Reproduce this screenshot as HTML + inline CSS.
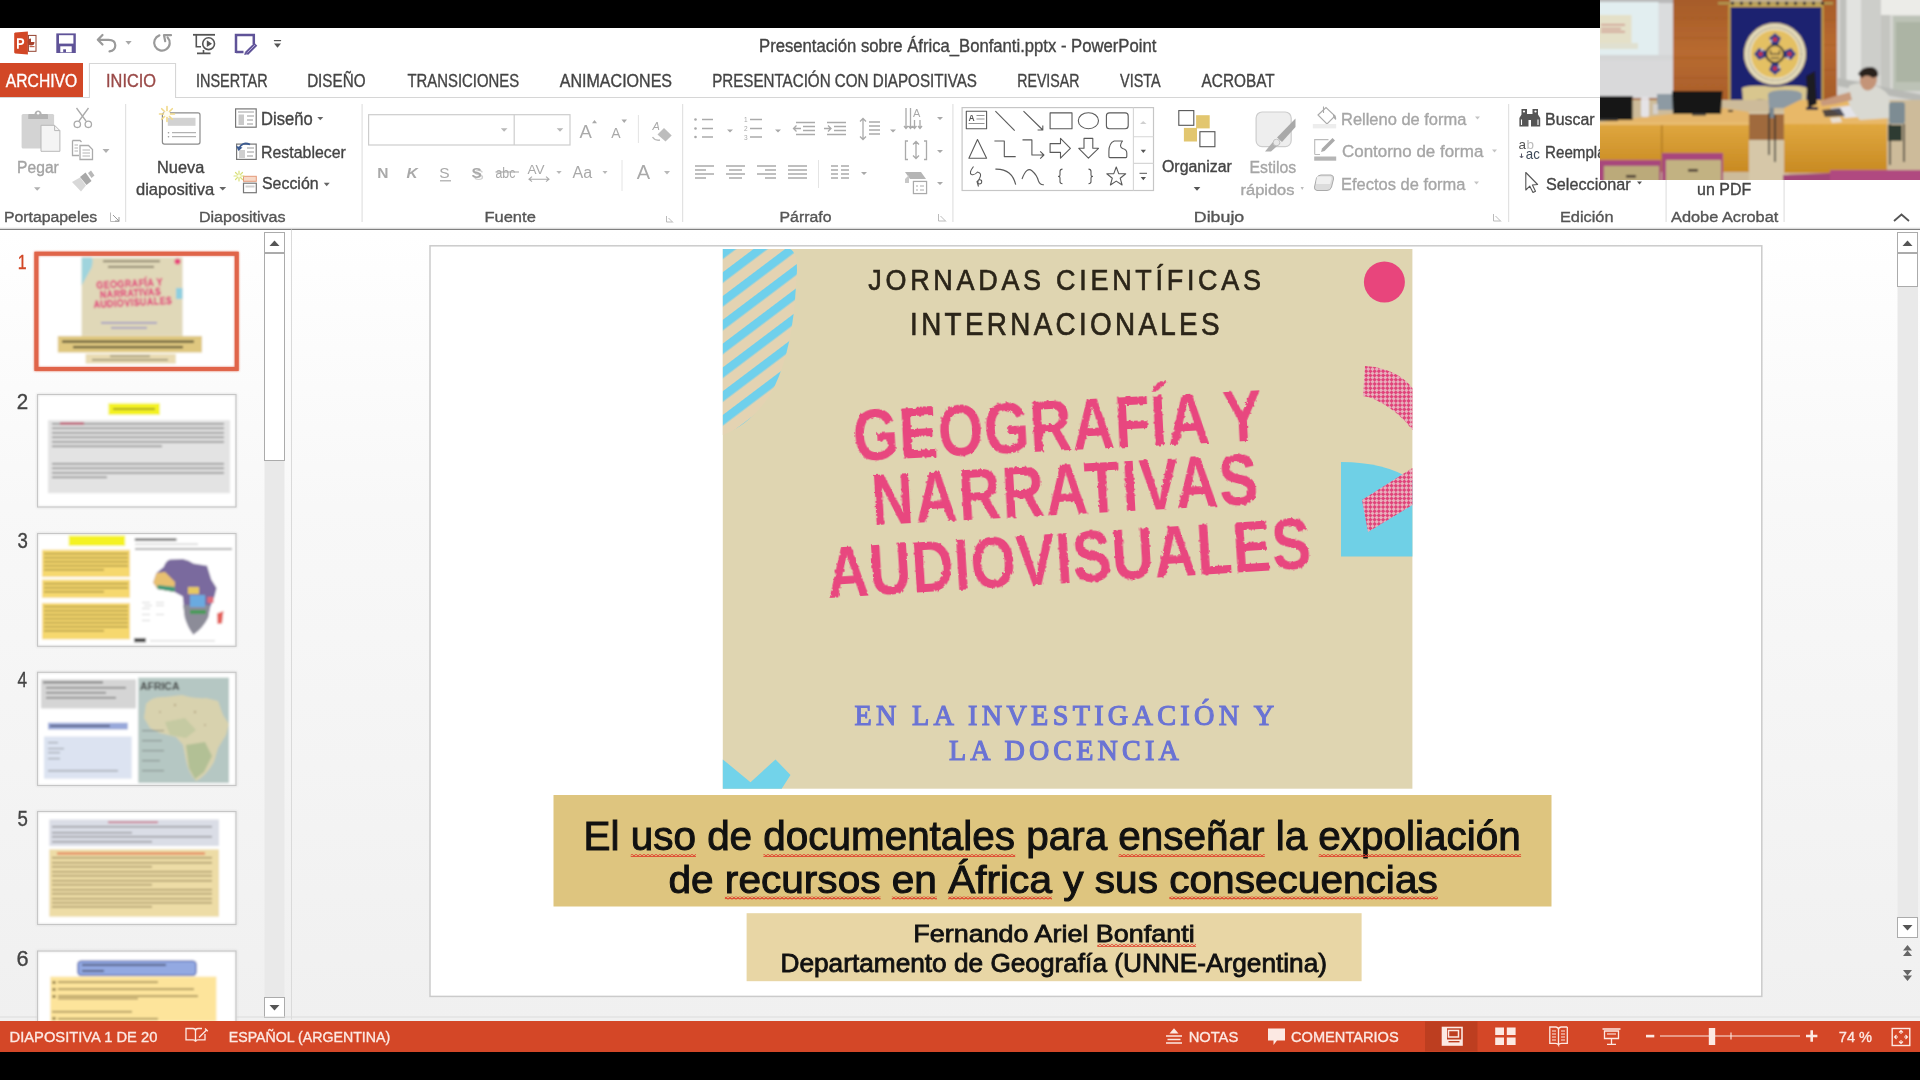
<!DOCTYPE html>
<html><head><meta charset="utf-8"><style>
html,body{margin:0;padding:0;width:1920px;height:1080px;overflow:hidden;background:#000}
svg{display:block;will-change:transform}
text{white-space:pre}
</style></head><body>
<svg width="1920" height="1080" viewBox="0 0 1920 1080">
<defs>
<linearGradient id="mainbg" x1="0" y1="0" x2="0" y2="1">
<stop offset="0" stop-color="#FFFFFF"/><stop offset="0.35" stop-color="#F8F8F8"/><stop offset="1" stop-color="#F0F0F0"/>
</linearGradient>
<pattern id="stripes" patternUnits="userSpaceOnUse" width="19" height="19" patternTransform="translate(722,249) rotate(-37)">
<rect width="19" height="19" fill="#E4D3B2"/><rect width="19" height="8.5" fill="#6FD0EC"/>
</pattern>
<pattern id="checker" patternUnits="userSpaceOnUse" width="6" height="6" patternTransform="rotate(45)">
<rect width="6" height="6" fill="#E8B0BC"/><rect width="3" height="3" fill="#E0437A"/><rect x="3" y="3" width="3" height="3" fill="#E0437A"/>
</pattern>
</defs>
<rect x="0" y="0" width="1920" height="1080" fill="#000"/>
<rect x="0" y="28" width="1920" height="200" fill="#FFFFFF"/>
<!-- tabs -->
<rect x="0" y="63" width="83" height="35" fill="#D24726"/>
<path d="M0 97.5 H89.5 V63.5 H175.5 V97.5 H1920" fill="none" stroke="#D6D6D6" stroke-width="1.2"/>
<rect x="90" y="64" width="85" height="34" fill="#FFFFFF"/>
<!-- ribbon bottom border -->
<rect x="0" y="227.7" width="1920" height="1.3" fill="#DCDCDC"/>
<!-- group separators -->
<g fill="#E2E2E2">
<rect x="125" y="104" width="1.2" height="118"/>
<rect x="361.5" y="104" width="1.2" height="118"/>
<rect x="682" y="104" width="1.2" height="118"/>
<rect x="952.3" y="104" width="1.2" height="118"/>
<rect x="1508" y="104" width="1.2" height="118"/>
<rect x="1665.5" y="104" width="1.2" height="118"/>
<rect x="1783.5" y="104" width="1.2" height="118"/>
</g>
<!-- main area -->
<rect x="0" y="229.5" width="1920" height="792" fill="url(#mainbg)"/>
<rect x="291" y="229.5" width="1" height="790" fill="#DADADA"/>
<!-- left scrollbar -->
<rect x="264.5" y="232.5" width="20" height="785" fill="#E9E9E9"/>
<rect x="264.5" y="232.5" width="20" height="20" fill="#FFF" stroke="#ABABAB" stroke-width="1"/>
<path d="M269.5 246 L274.5 240.5 L279.5 246 Z" fill="#555"/>
<rect x="264.5" y="253.5" width="20" height="207" fill="#FFF" stroke="#ABABAB" stroke-width="1"/>
<rect x="264.5" y="997.5" width="20" height="20" fill="#FFF" stroke="#ABABAB" stroke-width="1"/>
<path d="M269.5 1005 L274.5 1010.5 L279.5 1005 Z" fill="#555"/>
<!-- right scrollbar -->
<rect x="1897.5" y="232.5" width="20.5" height="705" fill="#E9E9E9"/>
<rect x="1897.5" y="232.5" width="20" height="20" fill="#FFF" stroke="#ABABAB" stroke-width="1"/>
<path d="M1902.5 246 L1907.5 240.5 L1912.5 246 Z" fill="#555"/>
<rect x="1897.5" y="253.5" width="20" height="33" fill="#FFF" stroke="#ABABAB" stroke-width="1"/>
<rect x="1897.5" y="917.5" width="20" height="20" fill="#FFF" stroke="#ABABAB" stroke-width="1"/>
<path d="M1902.5 925 L1907.5 930.5 L1912.5 925 Z" fill="#555"/>
<path d="M1903 950.5 L1907.5 945 L1912 950.5 Z M1903 956 L1907.5 950.5 L1912 956 Z" fill="#666"/>
<path d="M1903 970 L1907.5 975.5 L1912 970 Z M1903 975.5 L1907.5 981 L1912 975.5 Z" fill="#666"/>
<!-- status bar -->
<rect x="0" y="1021" width="1920" height="31" fill="#D44727"/>
<rect x="1425" y="1021.5" width="52.5" height="30" fill="#BD3E20"/>
<rect x="0" y="1016.5" width="1920" height="1" fill="#DCDCDC"/>
<!-- slide -->
<rect x="430" y="245.8" width="1331.8" height="750.6" fill="#FFFFFF" stroke="#CBCBCB" stroke-width="1.5"/>
<rect x="722.8" y="249" width="689.6" height="539.7" fill="#DFD5B1"/>
<g clip-path="none">
<path d="M722.8 249 H790 Q797 252 797 270 L795 300 Q790 360 770 395 Q750 425 722.8 435 Z" fill="url(#stripes)"/>
<circle cx="1384.4" cy="282" r="20.5" fill="#E8457C"/>
<path d="M1341 556.5 V462 Q1385 462 1412.4 480 V556.5 Z" fill="#6FD0E6"/>
<path d="M1365 366 L1375 367 Q1400 372 1412.4 388 V430 Q1398 410 1372 398 L1363 396 Z" fill="url(#checker)"/>
<path d="M1362 500 L1412.4 468 V505 L1368 532 Z" fill="url(#checker)"/>
<path d="M722.8 759.4 L750.5 782.2 L775.5 759.4 L790.5 775 L781.7 788.7 H722.8 Z" fill="#72D3EA"/>
</g>
<rect x="553.5" y="795" width="998" height="111.5" fill="#DEC57F"/>
<rect x="746.6" y="913.2" width="615" height="68" fill="#E8D6A5"/>
<!-- thumbnails -->
<clipPath id="thclip"><rect x="0" y="229" width="262" height="792"/></clipPath>
<filter id="thblur"><feGaussianBlur stdDeviation="0.8"/></filter>
<g clip-path="url(#thclip)"><g id="thumbs" filter="url(#thblur)">
<!-- 1 -->
<rect x="36.4" y="253.75" width="200.3" height="115.2" fill="#FFF" stroke="#E2664B" stroke-width="4"/>
<rect x="81.6" y="257.4" width="101" height="78.4" fill="#E0D8B8"/>
<path d="M81.6 257.4 h10 q2 2 0 10 l-10 18 z" fill="#8FD3E6" opacity="0.8"/>
<circle cx="177.5" cy="261.5" r="3" fill="#E8457C"/>
<rect x="176" y="288" width="6.5" height="11" fill="#8ECFE0"/>
<g fill="#4A4030" opacity="0.7"><rect x="103" y="260.5" width="57" height="1.6"/><rect x="108" y="266" width="46" height="1.6"/></g>
<g fill="#E24A7E" stroke="#E24A7E" stroke-width="0.4" font-family="Liberation Sans" font-weight="bold" transform="rotate(-3 132 300)">
<text x="97" y="287" font-size="10.5" letter-spacing="0.5" transform="translate(98,0) scale(0.85,1) translate(-98,0)">GEOGRAFÍA Y</text>
<text x="100" y="296.5" font-size="10.5" letter-spacing="0.5" transform="translate(101,0) scale(0.85,1) translate(-101,0)">NARRATIVAS</text>
<text x="93" y="306" font-size="10.5" letter-spacing="0.5" transform="translate(95,0) scale(0.85,1) translate(-95,0)">AUDIOVISUALES</text>
</g>
<g fill="#8A86C8" opacity="0.8"><rect x="101" y="322" width="56" height="1.6"/><rect x="111" y="327" width="36" height="1.6"/></g>
<rect x="57.8" y="336" width="144.2" height="16.5" fill="#DFC77F"/>
<g fill="#2A2A1A" opacity="0.75"><rect x="62" y="340.5" width="132" height="2.2"/><rect x="73" y="346" width="110" height="2.2"/></g>
<rect x="85.6" y="354" width="90.2" height="9.6" fill="#E9DBB2"/>
<g fill="#3A3A2A" opacity="0.5"><rect x="110" y="355.5" width="40" height="1.5"/><rect x="92" y="359" width="76" height="1.5"/></g>
<!-- 2 -->
<rect x="37.5" y="394.5" width="198.5" height="112.5" fill="#FFF" stroke="#C9C9C9" stroke-width="1"/>
<rect x="108.4" y="403.3" width="51.6" height="11.7" fill="#F4F222"/>
<rect x="113" y="408" width="42" height="2" fill="#5A5A20" opacity="0.5"/>
<rect x="48" y="420.2" width="182" height="73" fill="#E3E3E3"/>
<g fill="#6E6E6E" opacity="0.75">
<rect x="52" y="423" width="172" height="1.6"/><rect x="52" y="427.5" width="172" height="1.6"/><rect x="52" y="432" width="172" height="1.6"/><rect x="52" y="436.5" width="172" height="1.6"/><rect x="52" y="441" width="172" height="1.6"/><rect x="52" y="445.5" width="110" height="1.6"/>
<rect x="52" y="463" width="172" height="1.6"/><rect x="52" y="467.5" width="172" height="1.6"/><rect x="52" y="472" width="172" height="1.6"/><rect x="52" y="476.5" width="55" height="1.6"/>
</g>
<rect x="60" y="422.5" width="24" height="2" fill="#C0103C" opacity="0.8"/>
<!-- 3 -->
<rect x="37.5" y="533.5" width="198.5" height="112.8" fill="#FFF" stroke="#C9C9C9" stroke-width="1"/>
<rect x="68.7" y="535.6" width="56.5" height="10.4" fill="#F4F222"/>
<rect x="42" y="549.8" width="88" height="27.2" fill="#F6D86E"/>
<rect x="42" y="579.6" width="88" height="18.2" fill="#F6D86E"/>
<rect x="42" y="603" width="88" height="36.3" fill="#F6D86E"/>
<g fill="#6B5A20" opacity="0.55">
<rect x="44" y="553" width="84" height="1.4"/><rect x="44" y="557" width="84" height="1.4"/><rect x="44" y="561" width="84" height="1.4"/><rect x="44" y="565" width="84" height="1.4"/><rect x="44" y="569" width="60" height="1.4"/>
<rect x="44" y="583" width="84" height="1.4"/><rect x="44" y="587" width="84" height="1.4"/><rect x="44" y="591" width="60" height="1.4"/>
<rect x="44" y="606" width="84" height="1.4"/><rect x="44" y="610" width="84" height="1.4"/><rect x="44" y="614" width="84" height="1.4"/><rect x="44" y="618" width="84" height="1.4"/><rect x="44" y="622" width="84" height="1.4"/><rect x="44" y="626" width="84" height="1.4"/><rect x="44" y="630" width="60" height="1.4"/>
</g>
<rect x="134.8" y="538.3" width="41.7" height="2.6" fill="#333" opacity="0.7"/>
<rect x="135" y="543.6" width="63" height="1.2" fill="#999" opacity="0.5"/>
<rect x="135" y="548.2" width="97" height="1.6" fill="#555" opacity="0.6"/>
<path d="M163.8 566.8 Q166 560 170.1 559.4 L182.8 558.9 Q189 560 193.4 563.6 L207.1 565.7 L211.3 579.5 L216.6 587.9 L214.5 596.4 L210.3 606.9 L208.1 617.5 Q203 628 193.4 634.4 Q188 628 184.9 617.5 L182.8 596.4 L174.4 592.1 L157.5 589 L153.2 582.6 L156.4 573.1 Z" fill="#7A6A9E"/>
<path d="M156.4 573.1 L165 572 L175 582 L174.4 592.1 L157.5 589 L153.2 582.6 Z" fill="#E8C070"/>
<path d="M157.5 585 L175 587 L174.4 592.1 L157.5 589 Z" fill="#3E9A7A"/>
<path d="M183 605 L210 605 L208.1 617.5 Q203 628 193.4 634.4 Q188 628 184.9 617.5 Z" fill="#8C8C98"/>
<rect x="188" y="587" width="11" height="7" fill="#E6C860"/>
<rect x="190" y="595" width="15" height="12" fill="#6AAAE0"/>
<rect x="207.5" y="597" width="6" height="6" fill="#E06A78"/>
<path d="M190 610 H206 V614 H190 Z" fill="#4A9A5A"/>
<path d="M217 613.5 L223.5 611 L222 623.5 L217.5 624 Z" fill="#E4605A"/>
<g fill="#888" opacity="0.35"><rect x="142" y="602" width="8" height="1"/><rect x="144" y="605" width="8" height="1"/><rect x="142" y="608" width="8" height="1"/><rect x="142" y="614" width="8" height="1"/><rect x="142" y="620" width="8" height="1"/><rect x="156" y="602" width="8" height="1"/><rect x="156" y="605" width="8" height="1"/><rect x="156" y="614" width="8" height="1"/></g>
<rect x="134.2" y="638" width="11.6" height="4.3" fill="#444"/>
<rect x="150" y="640" width="65" height="1.5" fill="#CCC" opacity="0.6"/>
<!-- 4 -->
<rect x="37.5" y="672.3" width="198.5" height="113.2" fill="#FFF" stroke="#C9C9C9" stroke-width="1"/>
<rect x="41" y="679.4" width="95" height="29.1" fill="#D5D5D5"/>
<g fill="#333" opacity="0.6"><rect x="43" y="681.5" width="60" height="1.8"/><rect x="46" y="687" width="80" height="1.4"/><rect x="46" y="692" width="60" height="1.4"/><rect x="46" y="697" width="70" height="1.4"/></g>
<rect x="48" y="722.7" width="79.8" height="6.8" fill="#98A8DA"/>
<rect x="50" y="725" width="60" height="1.8" fill="#223" opacity="0.6"/>
<rect x="44" y="736.5" width="87.7" height="42.2" fill="#DCE3F1"/>
<g fill="#555" opacity="0.45"><rect x="48" y="742" width="10" height="1.2"/><rect x="48" y="748" width="16" height="1.2"/><rect x="48" y="752" width="12" height="1.2"/><rect x="48" y="758" width="12" height="1.2"/><rect x="48" y="770" width="70" height="1.4"/></g>
<rect x="138.2" y="677.6" width="90.8" height="105.4" fill="#B5C7C3"/>
<path d="M146 704 Q152 696 165 697 L182 695 Q196 699 206 698 L218 701 L223 715 L229 724 L226 735 L218 748 L214 762 Q206 776 196 781 Q188 772 186 760 L183 745 L176 737 L160 733 L150 728 L144 718 Z" fill="#D8D2AE"/>
<path d="M186 745 L205 742 L212 756 L204 772 L195 779 L189 768 Z" fill="#A9BC8E" opacity="0.8"/>
<path d="M165 722 L185 718 L196 730 L186 738 L170 735 Z" fill="#B9C49A" opacity="0.6"/>
<g fill="#9A8060" opacity="0.5"><circle cx="175" cy="705" r="1.2"/><circle cx="195" cy="712" r="1.2"/><circle cx="160" cy="712" r="1"/><circle cx="205" cy="725" r="1"/></g>
<text x="140" y="690" font-family="Liberation Sans" font-weight="bold" font-size="11" fill="#333" transform="translate(140,0) scale(0.95,1) translate(-140,0)">AFRICA</text>
<g fill="#555" opacity="0.45"><rect x="142" y="730" width="22" height="1.2"/><rect x="142" y="740" width="20" height="1.2"/><rect x="142" y="750" width="22" height="1.2"/><rect x="142" y="760" width="18" height="1.2"/><rect x="142" y="770" width="22" height="1.2"/></g>
<!-- 5 -->
<rect x="37.5" y="811.5" width="198.5" height="113" fill="#FFF" stroke="#C9C9C9" stroke-width="1"/>
<rect x="49.3" y="819.5" width="169.7" height="26.5" fill="#DADDE6"/>
<g fill="#555" opacity="0.55"><rect x="52" y="826" width="160" height="1.4"/><rect x="52" y="832" width="80" height="1.4"/><rect x="52" y="836" width="160" height="1.4"/><rect x="52" y="841" width="100" height="1.4"/></g>
<rect x="108" y="821.5" width="50" height="1.6" fill="#C03050" opacity="0.7"/>
<rect x="49.3" y="849.3" width="169.7" height="67.4" fill="#EDDCA6"/>
<rect x="57" y="852.5" width="148" height="2" fill="#E05030" opacity="0.7"/>
<g fill="#5A4A20" opacity="0.5">
<rect x="52" y="857" width="160" height="1.4"/><rect x="52" y="862" width="160" height="1.4"/><rect x="52" y="866" width="100" height="1.4"/><rect x="52" y="871" width="160" height="1.4"/><rect x="52" y="875" width="160" height="1.4"/><rect x="52" y="880" width="160" height="1.4"/><rect x="52" y="884" width="100" height="1.4"/><rect x="52" y="889" width="160" height="1.4"/><rect x="52" y="893" width="160" height="1.4"/><rect x="52" y="898" width="160" height="1.4"/><rect x="52" y="902" width="160" height="1.4"/><rect x="52" y="906" width="100" height="1.4"/>
</g>
<!-- 6 -->
<rect x="37.5" y="951" width="198.5" height="75" fill="#FFF" stroke="#C9C9C9" stroke-width="1"/>
<rect x="77.8" y="961" width="118.3" height="14.4" rx="3" fill="#93A9E2" stroke="#3D50A0" stroke-width="1"/>
<g fill="#223" opacity="0.6"><rect x="82" y="964" width="84" height="1.8"/><rect x="82" y="970" width="22" height="1.8"/></g>
<rect x="50.3" y="976.6" width="166.1" height="45" fill="#FDE49B"/>
<g fill="#4A3A10" opacity="0.6"><rect x="52.5" y="981" width="3" height="3"/><rect x="58" y="981.5" width="100" height="1.4"/><rect x="52.5" y="988" width="3" height="3"/><rect x="58" y="988.5" width="136" height="1.4"/><rect x="52.5" y="995" width="3" height="3"/><rect x="58" y="995.5" width="140" height="1.4"/><rect x="58" y="998" width="80" height="1.2"/><rect x="52" y="1011" width="80" height="1.4"/><rect x="52.5" y="1017" width="3" height="3"/><rect x="58" y="1018" width="100" height="1.4"/></g>
</g>
<g fill="none" stroke="#C6C6C6" stroke-width="1">
<rect x="37.5" y="394.5" width="198.5" height="112.5"/>
<rect x="37.5" y="533.5" width="198.5" height="112.8"/>
<rect x="37.5" y="672.3" width="198.5" height="113.2"/>
<rect x="37.5" y="811.5" width="198.5" height="113"/>
<rect x="37.5" y="951" width="198.5" height="75"/>
</g>
<rect x="36.4" y="253.75" width="200.3" height="115.2" fill="none" stroke="#E0654A" stroke-width="4"/>
</g>

<g id="icons">
<!-- QAT -->
<path d="M14.2 33.5 Q14.2 32.6 15.2 32.4 L27.9 31.6 V54.4 L15.2 53.4 Q14.2 53.2 14.2 52.3 Z" fill="#D24726"/>
<path d="M17 48.8 V38.2 H20.6 Q24.2 38.2 24.2 41.6 Q24.2 45 20.6 45 H18.8 V48.8 Z M18.8 39.9 V43.3 H20.4 Q22.3 43.3 22.3 41.6 Q22.3 39.9 20.4 39.9 Z" fill="#FFF"/>
<rect x="28.4" y="35.4" width="7.6" height="15.9" fill="#FFF" stroke="#93402D" stroke-width="1"/>
<path d="M31 38.5 V42 H34.5 A3.5 3.5 0 1 1 31 38.5 Z" fill="#A8402C"/>
<rect x="29.5" y="46" width="5" height="1.2" fill="#C0604A"/>
<rect x="56.3" y="33.4" width="19.5" height="19.6" fill="#5F5398"/>
<rect x="59" y="35.2" width="14.4" height="8.4" fill="#FFF"/>
<rect x="60.3" y="46.3" width="11.4" height="6" fill="#FFF"/>
<rect x="63.2" y="49.3" width="2.8" height="3" fill="#5F5398"/>
<g fill="none" stroke="#9A9A9A" stroke-width="2.2" stroke-linecap="round" stroke-linejoin="round">
<path d="M102.5 35 L97.8 39.8 L102.5 44.5 M98.5 39.8 H108.5 Q115.3 39.8 115.3 45.2 Q115.3 50.5 109.5 51.3"/>
<path d="M159.4 35.4 A7.8 7.8 0 1 0 167.6 37.4"/>
<path d="M171 35.2 H164 L165.2 41.2"/>
</g>
<path d="M125.4 41 H131.7 L128.5 44.7 Z" fill="#A8A8A8"/>

<g fill="none" stroke="#555" stroke-width="1.6">
<path d="M193 34.8 H215" stroke-width="1.8"/>
<path d="M196.3 35 V46.8 H201"/>
<circle cx="208.6" cy="43.7" r="5.9"/>
<path d="M197 53.4 H210.5 M203.5 50 L203.5 53"/>
</g>
<path d="M206.8 40.3 L212 43.7 L206.8 47.1 Z" fill="#555"/>
<path d="M236 53 V35 H253.8 V44 M236 51.9 H243.5" fill="none" stroke="#5F5398" stroke-width="2.5"/>
<path d="M246.5 53.5 L255.8 44.2" stroke="#5F5398" stroke-width="4.2" stroke-linecap="butt"/>
<path d="M244.2 55 L245 51.8 L247.5 54.3 Z" fill="#5F5398"/>
<path d="M247.3 52.6 L255 44.9" stroke="#C9C0E6" stroke-width="0.9"/>
<path d="M273.9 40.6 H281.1" stroke="#555" stroke-width="1.2"/>
<path d="M274 43.5 H281 L277.5 47.8 Z" fill="#555"/>

<!-- Portapapeles -->
<rect x="21.6" y="113.9" width="32.5" height="34.7" rx="1.5" fill="#D3D3D3"/>
<path d="M28.2 119.1 V115 Q28.2 114 29.2 114 H34.5 Q35 110.4 38.1 110.4 Q41.2 110.4 41.7 114 H47 Q48 114 48 115 V119.1 Z" fill="#B3B3B3"/>
<circle cx="38.1" cy="113.2" r="1.3" fill="#FFF"/>
<path d="M41 125.3 H54.6 L59.9 130.6 V151.3 H41 Z" fill="#F4F4F4" stroke="#B8B8B8" stroke-width="1"/>
<path d="M54.6 125.3 V130.6 H59.9" fill="none" stroke="#B8B8B8" stroke-width="1"/>
<g fill="none" stroke="#ABABAB" stroke-width="1.3">
<path d="M76.5 108 L86 121 M88.5 108 L79 121"/>
<circle cx="77.3" cy="124.3" r="3.2"/><circle cx="88.3" cy="124.3" r="3.2"/>
<path d="M72.5 140.5 H80 L81.5 142 M72.5 140.5 V155.5 H79"/>
<path d="M80 145.5 H88.5 L92.5 149.5 V159.5 H80 Z"/>
<path d="M82.5 150 H90 M82.5 153 H90 M82.5 156 H90 M74.5 145 H78 M74.5 148 H78 M74.5 151 H78" stroke-width="0.9"/>
</g>
<path d="M102.5 149 H109.5 L106 153 Z" fill="#B0B0B0"/>
<path d="M34 187.3 H40.5 L37.2 190.8 Z" fill="#B0B0B0"/>
<path d="M72 182 L80 177.5 L86 185.5 L81 191.5 Z" fill="#D8D8D8"/>
<path d="M80 177 L85.5 172.5 L91.5 181 L86.5 185 Z" fill="#A8A8A8"/>
<path d="M88 173 L91 170.5 L94.5 175.5 L91.5 178 Z" fill="#B8B8B8"/>
<path d="M110.5 212.5 V221.5 H119.5" fill="none" stroke="#BBB" stroke-width="1"/>
<path d="M113 215 L119 221 M119 217 V221 H115" fill="none" stroke="#999" stroke-width="1"/>
<!-- Diapositivas -->
<rect x="162.4" y="112.9" width="37.6" height="31.2" rx="2" fill="#FFF" stroke="#8C8C8C" stroke-width="1.2"/>
<rect x="167.8" y="117.8" width="27.7" height="8" fill="#D2D2D2"/>
<g stroke="#A0A0A0" stroke-width="1"><path d="M172 132.7 H196 M172 136.7 H196"/></g>
<circle cx="168.5" cy="132.7" r="0.8" fill="#999"/><circle cx="168.5" cy="136.7" r="0.8" fill="#999"/>
<g stroke="#F0D98A" stroke-width="1.6" stroke-linecap="round">
<path d="M167 106.5 V121.5 M159.5 114 H174.5 M161.7 108.7 L172.3 119.3 M172.3 108.7 L161.7 119.3"/>
</g>
<circle cx="167" cy="114" r="3" fill="#FFFDF2"/>
<path d="M219.3 187.1 H226.2 L222.7 190.6 Z" fill="#666"/>
<rect x="235.6" y="108.9" width="20.6" height="18.3" fill="#FFF" stroke="#777" stroke-width="1.2"/>
<rect x="238" y="111" width="16" height="2" fill="#CFCFCF"/>
<rect x="238.5" y="114.5" width="5.5" height="10.5" fill="#C9C9C9"/>
<g stroke="#999" stroke-width="1"><path d="M247 116 H254 M247 120 H253 M247 124 H253"/></g>
<path d="M317.3 116.9 H323.3 L320.3 120.3 Z" fill="#666"/>
<rect x="236.6" y="144.1" width="19.6" height="15.3" fill="#FFF" stroke="#777" stroke-width="1.2"/>
<rect x="239" y="150" width="6" height="8" fill="#CFCFCF"/>
<g stroke="#999" stroke-width="1"><path d="M247 148 H254 M247 152 H254 M247 156 H253"/></g>
<path d="M238.5 149.5 Q242 141 250 144.5" fill="none" stroke="#3B5B92" stroke-width="1.8"/>
<path d="M236 146 L238.5 151 L242.5 147.5 Z" fill="#3B5B92"/>
<rect x="243.5" y="176.3" width="12.8" height="5" fill="#F7D9C8" stroke="#E49A7A" stroke-width="1"/>
<rect x="243.5" y="183.2" width="12.8" height="9.5" fill="#FFF" stroke="#777" stroke-width="1.2"/>
<rect x="245.5" y="185.5" width="9" height="2" fill="#D0D0D0"/>
<g stroke="#D8E07A" stroke-width="1.2" stroke-linecap="round"><path d="M239 171 V181 M234 176 H244 M235.5 172.5 L242.5 179.5 M242.5 172.5 L235.5 179.5"/></g>
<circle cx="239" cy="176" r="1.8" fill="#FBFDE8"/>
<path d="M323.8 182.7 H329.7 L326.7 186.2 Z" fill="#666"/>
<!-- Fuente -->
<rect x="368.6" y="114.7" width="201.4" height="30.3" fill="#FFF" stroke="#CDCDCD" stroke-width="1.2"/>
<path d="M514.2 114.7 V145" stroke="#CDCDCD" stroke-width="1.2"/>
<path d="M500.8 128.3 H507.5 L504.1 131.7 Z M556.7 128.3 H563.3 L560 131.7 Z" fill="#B8B8B8"/>
<g font-family="Liberation Sans" fill="#A9A9A9">
<text x="579.5" y="137.5" font-size="18.5">A</text>
<text x="611.3" y="137.5" font-size="14">A</text>
<text x="377.2" y="178" font-size="15.5" font-weight="bold">N</text>
<text x="406.5" y="178" font-size="15.5" font-weight="bold" font-style="italic">K</text>
<text x="439.2" y="178" font-size="15.5">S</text>
<text x="473.5" y="180" font-size="15.5" fill="#D0D0D0">S</text>
<text x="471.5" y="178" font-size="15.5" font-weight="bold">S</text>
<text x="495.5" y="178" font-size="14.5" transform="translate(495.5,0) scale(0.85,1) translate(-495.5,0)">abc</text>
<text x="527.5" y="173.5" font-size="13.5">AV</text>
<text x="572.5" y="178" font-size="16">Aa</text>
<text x="636.8" y="179.2" font-size="20">A</text>
</g>
<path d="M592 123.2 L594.5 120 L597 123.2 Z M621.5 119.5 H627 L624.2 123 Z" fill="#A9A9A9"/>
<path d="M638.4 115 V143 M622 160 V191" stroke="#E4E4E4" stroke-width="1"/>
<path d="M440 180.8 H451" stroke="#A9A9A9" stroke-width="1.2"/>
<path d="M495.5 172 H519" stroke="#A9A9A9" stroke-width="1.1"/>
<path d="M529.5 179.2 H548.5 M532 176.7 L529 179.2 L532 181.7 M546 176.7 L549 179.2 L546 181.7" fill="none" stroke="#A9A9A9" stroke-width="1.1"/>
<path d="M556.3 171 H561.7 L559 174 Z M602.5 171 H607.5 L605 174 Z M664 171 H670 L667 174.5 Z" fill="#B8B8B8"/>
<path d="M657.5 134.5 L664 128 L671.7 135.5 L665.5 141.5 Z" fill="#BDBDBD"/>
<text x="652.5" y="129.5" font-family="Liberation Sans" font-style="italic" font-size="11" fill="#AAA">A</text>
<path d="M652.5 137 Q655 141 660 140" fill="none" stroke="#BBB" stroke-width="1.4"/>
<path d="M666.5 216 V222 H672.5 M668.5 218 L673 222.5" fill="none" stroke="#BBB" stroke-width="1"/>
<!-- Parrafo -->
<g fill="#A9A9A9">
<circle cx="695.5" cy="119.5" r="1.3"/><circle cx="695.5" cy="128.5" r="1.3"/><circle cx="695.5" cy="137" r="1.3"/>
<path d="M727 129.5 H733 L730 132.5 Z M775 129.5 H781 L778 132.5 Z M890 129.5 H896 L893 132.5 Z M937 117 H943 L940 120 Z M937 150 H943 L940 153 Z M937 182 H943 L940 185 Z M861 172 H867 L864 175 Z"/>
</g>
<g stroke="#AAAAAA" stroke-width="1.3" fill="none">
<path d="M702 119.5 H713 M702 128.5 H713 M702 137 H713"/>
<path d="M750 119.5 H762 M750 128.5 H762 M750 137 H762"/>
<path d="M796 122.5 H815 M803 126.5 H815 M803 130.5 H815 M796 134.5 H815 M801 128.5 H793.5 M796.5 125.5 L793.5 128.5 L796.5 131.5"/>
<path d="M827 122.5 H846 M834 126.5 H846 M834 130.5 H846 M827 134.5 H846 M824 128.5 H831 M828 125.5 L831 128.5 L828 131.5"/>
<path d="M863 118.5 V139.5 M860 121.5 L863 118.5 L866 121.5 M860 136.5 L863 139.5 L866 136.5 M869 122 H880 M869 126 H880 M869 130 H880 M869 134 H880"/>
<path d="M906 108 V128.5 M910.5 108 V128.5 M914.5 120 V128.5 M920 120 V128.5 M904 126 L906 128.5 L908 126 M908.5 126 L910.5 128.5 L912.5 126 M912.5 126 L914.5 128.5 L916.5 126 M918 126 L920 128.5 L922 126"/>
<path d="M908 141 H905.5 V159.5 H908 M924 141 H926.5 V159.5 H924 M916 142 V158 M913 144.5 L916 141.5 L919 144.5 M913 155.5 L916 158.5 L919 155.5"/>
<path d="M695 166 H714 M695 170 H706 M695 174 H714 M695 178 H706"/>
<path d="M726 166 H745 M729 170 H742 M726 174 H745 M729 178 H742"/>
<path d="M757 166 H776 M765 170 H776 M757 174 H776 M765 178 H776"/>
<path d="M788 166 H807 M788 170 H807 M788 174 H807 M788 178 H807"/>
<path d="M831 166 H838 M841 166 H849 M831 170 H838 M841 170 H849 M831 174 H838 M841 174 H849 M831 178 H838 M841 178 H849"/>
<rect x="913.5" y="181.5" width="13" height="12" fill="#FFF"/>
</g>
<text x="744" y="122" font-family="Liberation Sans" font-size="6.5" fill="#AAA">1</text>
<text x="744" y="131" font-family="Liberation Sans" font-size="6.5" fill="#AAA">2</text>
<text x="744" y="139.5" font-family="Liberation Sans" font-size="6.5" fill="#AAA">3</text>
<text x="913" y="117" font-family="Liberation Sans" font-size="11" fill="#AAA">A</text>
<path d="M905 172 H921 L926 179 H910 Z" fill="#B5B5B5"/>
<path d="M905 179 L909 175 V183 H905 Z" fill="#C8C8C8"/>
<rect x="913.5" y="181.5" width="13" height="12" fill="#FFF" stroke="#AAA" stroke-width="1.1"/>
<path d="M916 186 H918 M920 186 H924 M916 190 H918 M920 190 H924" stroke="#AAA" stroke-width="1"/>
<path d="M818.5 160 V188" stroke="#E4E4E4" stroke-width="1"/>
<path d="M938.5 214 V221 H945.5 M940.5 216 L946 221.5" fill="none" stroke="#BBB" stroke-width="1"/>

<!-- Dibujo gallery -->
<rect x="962.1" y="107.6" width="191.4" height="82.9" fill="#FFF" stroke="#C6C6C6" stroke-width="1.2"/>
<path d="M1133.4 107.6 V190.5 M1133.4 136.8 H1153.5 M1133.4 163.4 H1153.5" stroke="#D6D6D6" stroke-width="1.1"/>
<path d="M1140 124 H1146.5 L1143.2 121 Z" fill="#D0D0D0"/>
<path d="M1140.7 149.8 H1146 L1143.3 153 Z M1140.7 177 H1146 L1143.3 180.2 Z" fill="#555"/>
<path d="M1139.5 173.3 H1147" stroke="#555" stroke-width="1"/>
<g fill="none" stroke="#5A5A5A" stroke-width="1.1" stroke-linejoin="round">
<rect x="966.3" y="111.3" width="20.3" height="17.5"/>
<path d="M976.5 115.5 H984.5 M976.5 119 H984.5 M968.5 123.5 H984.5" stroke-width="0.9" stroke="#888"/>
<path d="M995.4 111.1 L1014.7 130.6"/>
<path d="M1023.5 111.1 L1042.8 130 M1037.6 130 H1042.8 V125.4"/>
<rect x="1050.1" y="112.9" width="21.9" height="15.9"/>
<ellipse cx="1088.4" cy="120.7" rx="10.1" ry="8"/>
<rect x="1106.4" y="112.9" width="21.8" height="15.9" rx="3"/>
<path d="M968.9 158.2 L977.5 139.6 L986.6 158.2 Z"/>
<path d="M994.4 141 H1004.3 V156.6 H1015.7"/>
<path d="M1022.5 139.9 H1031.9 V155 H1043.9 M1040.2 151.4 L1043.9 155 L1040.2 158.7"/>
<path d="M1050.1 143.6 H1060.5 V138.4 L1070.4 148.3 L1060.5 158.2 V152.4 H1050.1 Z"/>
<path d="M1084 138.4 H1092.8 V148.3 H1098.5 L1088.4 158.2 L1078.75 148.3 H1084 Z"/>
<path d="M1108.9 151.6 Q1108.9 143 1114.2 141 H1122.5 Q1118.5 146 1122.5 148.5 Q1126.8 149.5 1126.8 153 V156.6 Q1126.8 157.6 1125.8 157.6 H1109.9 Q1108.9 157.6 1108.9 156.6 Z"/>
<path d="M973.5 166.5 Q968.5 173 971.5 174.5 Q974.5 175.5 977.5 172 Q982.5 173 979.5 178.5 Q976.5 182.5 979 184 Q982.5 184 981.5 180.5 Q979.5 178.5 977 181.5 L978.5 186.5"/>
<path d="M995.4 169.1 Q1012 168.6 1015.7 184.7"/>
<path d="M1022 179 Q1026.7 166.5 1031.9 170.7 Q1037 175 1038.5 181 Q1040 185.2 1043.9 184.7"/>
<path d="M1062.5 169.1 Q1060 169.1 1060 171.5 V175 Q1060 176.4 1058.5 176.4 Q1060 176.4 1060 178 V181.5 Q1060 183.7 1062.5 183.7"/>
<path d="M1088.5 169.1 Q1091 169.1 1091 171.5 V175 Q1091 176.4 1092.5 176.4 Q1091 176.4 1091 178 V181.5 Q1091 183.7 1088.5 183.7"/>
<path d="M1116.25 167 L1118.7 173.6 L1125.7 173.8 L1120.2 178.2 L1122.1 185 L1116.25 181.1 L1110.4 185 L1112.3 178.2 L1106.8 173.8 L1113.8 173.6 Z"/>
</g>
<text x="968.5" y="121" font-family="Liberation Sans" font-weight="bold" font-size="8.5" fill="#555">A</text>
<!-- Organizar -->
<rect x="1196.1" y="115.2" width="13.6" height="13.2" fill="#E2C66F"/>
<rect x="1183.9" y="127.9" width="13.1" height="13.6" fill="#E2C66F"/>
<rect x="1178.8" y="110.6" width="15" height="14.7" fill="#FFF" stroke="#555" stroke-width="1.1"/>
<rect x="1199.9" y="131.7" width="15" height="15" fill="#FFF" stroke="#555" stroke-width="1.1"/>
<path d="M1193.7 187 H1200.3 L1197 190.7 Z" fill="#555"/>
<!-- Estilos rapidos -->
<rect x="1256.1" y="112" width="35.1" height="34.6" rx="6" fill="#EEEEEE" stroke="#CDCDCD" stroke-width="1.2"/>
<path d="M1265 151.5 L1275 139.5 L1280.5 143 L1271 151.5 Z" fill="#B0B0B0"/>
<path d="M1277 137.5 L1295.5 118.5 V127 L1282 142 Z" fill="#A9A9A9"/>
<circle cx="1276.5" cy="142.5" r="3.3" fill="#E8E8E8" stroke="#BBB" stroke-width="0.8"/>
<path d="M1300.6 187 H1303.9 L1302.2 190 Z" fill="#BBB"/>
<!-- Relleno / Contorno / Efectos -->
<path d="M1318 115 L1326 107.5 L1335 116 L1327 124 Z" fill="#FFF" stroke="#AAA" stroke-width="1.1"/>
<path d="M1323.5 106.5 V113" stroke="#AAA" stroke-width="1.1"/>
<path d="M1333 114 Q1337 116 1336 120 Q1334 119 1333 116 Z" fill="#AAA"/>
<rect x="1312.8" y="124" width="23.4" height="4.4" fill="#EDEDED"/>
<path d="M1314.7 154.5 V139.6 H1328.5 M1314.7 154.5 H1320" fill="none" stroke="#BBB" stroke-width="1.1"/>
<path d="M1321 152 L1322 148.5 L1332.5 138 L1335 140.5 L1324.5 151 Z" fill="#AAA"/>
<rect x="1314.2" y="156.5" width="22" height="4.2" fill="#B5B5B5"/>
<path d="M1316.5 178 Q1318 175 1321 175 H1331 Q1334 175.5 1333.5 179 L1331.5 187 Q1330.5 190.5 1327 190.5 H1317 Q1314 190 1314.5 187 Z" fill="#DCDCDC" stroke="#AAA" stroke-width="1"/>
<path d="M1317 176.5 H1330 Q1332 177 1331.5 179 L1330 184 H1316 Z" fill="#F0F0F0"/>
<path d="M1475 116.5 H1480 L1477.5 119.5 Z M1492 149.5 H1497 L1494.5 152.5 Z M1474 181.5 H1479 L1476.5 184.5 Z" fill="#C4C4C4"/>
<path d="M1493.5 214 V221 H1500.5 M1495.5 216 L1501 221.5" fill="none" stroke="#BBB" stroke-width="1"/>
<!-- Edicion -->
<g fill="#555">
<path d="M1521.5 109 H1527 V114 H1532.5 V109 H1538 V114.5 L1540.2 118 V126.4 H1531 V120 H1528.5 V126.4 H1519.4 V118 L1521.5 114.5 Z"/>
</g>
<path d="M1521.5 119.5 V125 M1538 119.5 V125" stroke="#FFF" stroke-width="1.1"/>
<circle cx="1524" cy="111.5" r="1.1" fill="#FFF"/><circle cx="1535.5" cy="111.5" r="1.1" fill="#FFF"/>
<text x="1518.6" y="149.2" font-family="Liberation Sans" font-size="13.5" fill="#555">a</text>
<text x="1526.6" y="149.2" font-family="Liberation Sans" font-size="13.5" fill="#BBBBBB">b</text>
<text x="1525.8" y="159.4" font-family="Liberation Sans" font-size="14" fill="#3F4B5B" transform="translate(1525.8,0) scale(0.95,1) translate(-1525.8,0)">ac</text>
<path d="M1521.5 153.5 V157.5 M1519.8 156 L1521.5 158 L1523.2 156" fill="none" stroke="#556" stroke-width="1"/>
<path d="M1525.8 172.5 V190 L1529.8 186.2 L1533 192.5 L1535.5 191.2 L1532.4 185 L1537.6 184.5 Z" fill="#FFF" stroke="#555" stroke-width="1.1" stroke-linejoin="round"/>
<path d="M1637 181.5 H1642 L1639.5 184.5 Z" fill="#555"/>
<path d="M1894 221 L1901.5 214.5 L1909 221" fill="none" stroke="#555" stroke-width="1.8"/>
<!-- Status bar icons -->
<g fill="none" stroke="#FCE9E3" stroke-width="1.3">
<path d="M186 1028.5 H193 Q195.5 1028.5 195.5 1031 V1041.5 Q195 1039.8 193 1039.8 H186 Z M195.5 1031 Q195.5 1028.5 198 1028.5 H202"/>
<path d="M195.5 1041.5 Q196 1039.8 198 1039.8 H205 V1034"/>
<path d="M199 1037.5 L206.5 1030 M205 1028.5 L207.8 1031.3"/>
<path d="M1166 1036 H1182 M1167.5 1039.5 H1180.5 M1166 1043 H1182"/>
<path d="M1271.5 1028.5"/>
</g>
<path d="M1169.5 1033.5 L1174 1028.3 L1178.5 1033.5 Z" fill="#FCE9E3"/>
<path d="M1268 1028.5 H1285 V1040.5 H1277 L1273.5 1045 V1040.5 H1268 Z" fill="#FCE9E3"/>
<rect x="1442.5" y="1027.5" width="19.5" height="17.5" fill="none" stroke="#FCE9E3" stroke-width="1.6"/>
<rect x="1448.5" y="1030.5" width="10" height="6.5" fill="none" stroke="#FCE9E3" stroke-width="1.5"/>
<rect x="1442.5" y="1027.5" width="4.5" height="17.5" fill="#FCE9E3"/>
<rect x="1446" y="1039.5" width="16" height="5.5" fill="#FCE9E3"/>
<path d="M1448.5 1041.7 H1459.5" stroke="#BD3E20" stroke-width="1.4"/>
<g fill="#FCE9E3">
<rect x="1495.2" y="1027.5" width="8.8" height="7.5"/><rect x="1506.8" y="1027.5" width="8.8" height="7.5"/>
<rect x="1495.2" y="1037.5" width="8.8" height="7.5"/><rect x="1506.8" y="1037.5" width="8.8" height="7.5"/>
</g>
<g fill="none" stroke="#FCE9E3" stroke-width="1.3">
<path d="M1549.8 1027 H1556 Q1558.5 1027.5 1558.5 1029.5 V1045 Q1557.5 1043.3 1555.5 1043.3 H1549.8 Z M1567.3 1027 H1561 Q1558.5 1027.5 1558.5 1029.5 M1558.5 1045 Q1559.5 1043.3 1561.5 1043.3 H1567.3 V1027"/>
<path d="M1552 1031 H1556 M1552 1034 H1556 M1552 1037 H1556 M1552 1040 H1556 M1561 1031 H1565 M1561 1034 H1565 M1561 1037 H1565 M1561 1040 H1565" stroke-width="1"/>
<path d="M1602.5 1029 H1620.5 M1604.5 1031 H1618.5 V1038.5 H1604.5 Z M1611.5 1038.5 V1044 M1607 1044.3 H1616"/>
<path d="M1607 1034 H1616" stroke-width="1.1"/>
<path d="M1660 1036 H1800" stroke-width="1.2"/>
<path d="M1731 1032.5 V1039.5" stroke-width="1.1"/>
<rect x="1892.2" y="1028.5" width="17.6" height="17" stroke-width="1.4"/>
<path d="M1901 1030.5 V1034 M1899 1032.5 L1901 1030.5 L1903 1032.5 M1901 1043.5 V1040 M1899 1041.5 L1901 1043.5 L1903 1041.5 M1894.5 1037 H1898 M1896.5 1035 L1894.5 1037 L1896.5 1039 M1907.5 1037 H1904 M1905.5 1035 L1907.5 1037 L1905.5 1039" stroke-width="1.1"/>
</g>
<rect x="1708.8" y="1028" width="6.4" height="17" fill="#FCE9E3"/>
<rect x="1646" y="1034.8" width="8.3" height="2.6" fill="#FCE9E3"/>
<path d="M1806 1036 H1817.4 M1811.7 1030.3 V1041.7" stroke="#FCE9E3" stroke-width="2.6"/>
</g>

<g id="texts">
<text transform="translate(759.04,51.50) scale(0.9560,1)" font-family="Liberation Sans" font-size="17.44" fill="#444" stroke="#444" stroke-width="0.35">Presentación sobre África_Bonfanti.pptx - PowerPoint</text>
<text transform="translate(5.80,87.00) scale(0.8988,1)" font-family="Liberation Sans" font-size="17.44" fill="#FFFFFF" stroke="#FFFFFF" stroke-width="0.35">ARCHIVO</text>
<text transform="translate(106.06,87.00) scale(0.9377,1)" font-family="Liberation Sans" font-size="17.44" fill="#9A4A48" stroke="#9A4A48" stroke-width="0.35">INICIO</text>
<text transform="translate(195.97,87.00) scale(0.8286,1)" font-family="Liberation Sans" font-size="17.44" fill="#444" stroke="#444" stroke-width="0.35">INSERTAR</text>
<text transform="translate(307.13,87.00) scale(0.8730,1)" font-family="Liberation Sans" font-size="17.44" fill="#444" stroke="#444" stroke-width="0.35">DISEÑO</text>
<text transform="translate(407.50,87.00) scale(0.8535,1)" font-family="Liberation Sans" font-size="17.44" fill="#444" stroke="#444" stroke-width="0.35">TRANSICIONES</text>
<text transform="translate(559.70,87.00) scale(0.9214,1)" font-family="Liberation Sans" font-size="17.44" fill="#444" stroke="#444" stroke-width="0.35">ANIMACIONES</text>
<text transform="translate(712.13,87.00) scale(0.8702,1)" font-family="Liberation Sans" font-size="17.44" fill="#444" stroke="#444" stroke-width="0.35">PRESENTACIÓN CON DIAPOSITIVAS</text>
<text transform="translate(1017.19,87.00) scale(0.8138,1)" font-family="Liberation Sans" font-size="17.44" fill="#444" stroke="#444" stroke-width="0.35">REVISAR</text>
<text transform="translate(1120.00,87.00) scale(0.8289,1)" font-family="Liberation Sans" font-size="17.44" fill="#444" stroke="#444" stroke-width="0.35">VISTA</text>
<text transform="translate(1201.60,87.00) scale(0.8807,1)" font-family="Liberation Sans" font-size="17.44" fill="#444" stroke="#444" stroke-width="0.35">ACROBAT</text>
<text transform="translate(3.96,221.50) scale(1.0365,1)" font-family="Liberation Sans" font-size="15.26" fill="#555" stroke="#555" stroke-width="0.35">Portapapeles</text>
<text transform="translate(198.95,221.50) scale(1.0541,1)" font-family="Liberation Sans" font-size="15.26" fill="#555" stroke="#555" stroke-width="0.35">Diapositivas</text>
<text transform="translate(484.42,221.50) scale(1.0827,1)" font-family="Liberation Sans" font-size="15.26" fill="#555" stroke="#555" stroke-width="0.35">Fuente</text>
<text transform="translate(779.56,221.50) scale(1.0386,1)" font-family="Liberation Sans" font-size="15.26" fill="#555" stroke="#555" stroke-width="0.35">Párrafo</text>
<text transform="translate(1193.83,221.50) scale(1.1664,1)" font-family="Liberation Sans" font-size="15.26" fill="#555" stroke="#555" stroke-width="0.35">Dibujo</text>
<text transform="translate(1559.93,221.50) scale(1.0714,1)" font-family="Liberation Sans" font-size="15.26" fill="#555" stroke="#555" stroke-width="0.35">Edición</text>
<text transform="translate(1671.00,221.50) scale(1.0723,1)" font-family="Liberation Sans" font-size="15.26" fill="#555" stroke="#555" stroke-width="0.35">Adobe Acrobat</text>
<text transform="translate(17.10,172.50) scale(0.9039,1)" font-family="Liberation Sans" font-size="17.30" fill="#A3A3A3" stroke="#A3A3A3" stroke-width="0.35">Pegar</text>
<text transform="translate(157.02,172.50) scale(0.9793,1)" font-family="Liberation Sans" font-size="16.72" fill="#444" stroke="#444" stroke-width="0.35">Nueva</text>
<text transform="translate(136.00,195.00) scale(1.0002,1)" font-family="Liberation Sans" font-size="16.55" fill="#444" stroke="#444" stroke-width="0.35">diapositiva</text>
<text transform="translate(261.05,125.00) scale(0.9509,1)" font-family="Liberation Sans" font-size="17.44" fill="#444" stroke="#444" stroke-width="0.35">Diseño</text>
<text transform="translate(261.08,157.50) scale(0.9185,1)" font-family="Liberation Sans" font-size="17.30" fill="#444" stroke="#444" stroke-width="0.35">Restablecer</text>
<text transform="translate(262.00,189.40) scale(0.9200,1)" font-family="Liberation Sans" font-size="17.30" fill="#444" stroke="#444" stroke-width="0.35">Sección</text>
<text transform="translate(1162.00,172.00) scale(0.9958,1)" font-family="Liberation Sans" font-size="15.99" fill="#444" stroke="#444" stroke-width="0.35">Organizar</text>
<text transform="translate(1249.56,172.60) scale(0.9393,1)" font-family="Liberation Sans" font-size="16.86" fill="#A6A6A6" stroke="#A6A6A6" stroke-width="0.35">Estilos</text>
<text transform="translate(1240.60,194.50) scale(1.1351,1)" font-family="Liberation Sans" font-size="14.48" fill="#A6A6A6" stroke="#A6A6A6" stroke-width="0.35">rápidos</text>
<text transform="translate(1341.02,124.50) scale(0.9850,1)" font-family="Liberation Sans" font-size="16.72" fill="#A6A6A6" stroke="#A6A6A6" stroke-width="0.35">Relleno de forma</text>
<text transform="translate(1342.00,157.00) scale(1.0144,1)" font-family="Liberation Sans" font-size="16.72" fill="#A6A6A6" stroke="#A6A6A6" stroke-width="0.35">Contorno de forma</text>
<text transform="translate(1341.04,189.80) scale(0.9610,1)" font-family="Liberation Sans" font-size="17.15" fill="#A6A6A6" stroke="#A6A6A6" stroke-width="0.35">Efectos de forma</text>
<text transform="translate(1545.05,125.00) scale(0.9529,1)" font-family="Liberation Sans" font-size="16.72" fill="#444" stroke="#444" stroke-width="0.35">Buscar</text>
<text transform="translate(1545.09,157.50) scale(0.9052,1)" font-family="Liberation Sans" font-size="16.72" fill="#444" stroke="#444" stroke-width="0.35">Reemplazar</text>
<text transform="translate(1546.00,189.70) scale(0.9533,1)" font-family="Liberation Sans" font-size="17.01" fill="#444" stroke="#444" stroke-width="0.35">Seleccionar</text>
<text transform="translate(1697.04,195.00) scale(0.9563,1)" font-family="Liberation Sans" font-size="16.72" fill="#444" stroke="#444" stroke-width="0.35">un PDF</text>
<text transform="translate(9.54,1041.80) scale(0.9556,1)" font-family="Liberation Sans" font-size="15.41" fill="#FCE9E3" stroke="#FCE9E3" stroke-width="0.35">DIAPOSITIVA 1 DE 20</text>
<text transform="translate(228.78,1041.80) scale(0.9201,1)" font-family="Liberation Sans" font-size="15.41" fill="#FCE9E3" stroke="#FCE9E3" stroke-width="0.35">ESPAÑOL (ARGENTINA)</text>
<text transform="translate(1188.64,1041.80) scale(0.9563,1)" font-family="Liberation Sans" font-size="15.41" fill="#FCE9E3" stroke="#FCE9E3" stroke-width="0.35">NOTAS</text>
<text transform="translate(1291.00,1041.80) scale(0.9490,1)" font-family="Liberation Sans" font-size="15.41" fill="#FCE9E3" stroke="#FCE9E3" stroke-width="0.35">COMENTARIOS</text>
<text transform="translate(1838.80,1041.80) scale(0.9465,1)" font-family="Liberation Sans" font-size="15.41" fill="#FCE9E3" stroke="#FCE9E3" stroke-width="0.35">74 %</text>
<text transform="translate(17.64,269.40) scale(0.7600,1)" font-family="Liberation Sans" font-size="20.93" fill="#D24726" stroke="#D24726" stroke-width="0.35">1</text>
<text transform="translate(16.64,409.00) scale(0.9600,1)" font-family="Liberation Sans" font-size="21.37" fill="#444" stroke="#444" stroke-width="0.35">2</text>
<text transform="translate(17.60,548.20) scale(0.8727,1)" font-family="Liberation Sans" font-size="21.37" fill="#444" stroke="#444" stroke-width="0.35">3</text>
<text transform="translate(17.60,687.00) scale(0.8000,1)" font-family="Liberation Sans" font-size="21.37" fill="#444" stroke="#444" stroke-width="0.35">4</text>
<text transform="translate(17.60,826.20) scale(0.8727,1)" font-family="Liberation Sans" font-size="21.37" fill="#444" stroke="#444" stroke-width="0.35">5</text>
<text transform="translate(16.55,966.00) scale(0.9545,1)" font-family="Liberation Sans" font-size="22.82" fill="#444" stroke="#444" stroke-width="0.35">6</text>
<text transform="translate(868.30,289.80) scale(0.9000,1)" letter-spacing="4.147" font-family="Liberation Sans" font-size="29.94" fill="#2B2519" stroke="#2B2519" stroke-width="0.67">JORNADAS CIENTÍFICAS</text>
<text transform="translate(910.10,334.70) scale(0.9000,1)" letter-spacing="3.679" font-family="Liberation Sans" font-size="30.96" fill="#2B2519" stroke="#2B2519" stroke-width="0.67">INTERNACIONALES</text>
<text transform="translate(854.50,724.70) scale(0.9500,1)" letter-spacing="4.497" font-family="Liberation Serif" font-size="29.77" fill="#6A73D4" stroke="#6A73D4" stroke-width="1.16">EN LA INVESTIGACIÓN Y</text>
<text transform="translate(949.00,759.80) scale(0.9500,1)" letter-spacing="4.374" font-family="Liberation Serif" font-size="29.62" fill="#6A73D4" stroke="#6A73D4" stroke-width="1.16">LA DOCENCIA</text>
<text transform="translate(583.56,850.40) scale(1.0118,1)" font-family="Liberation Sans" font-size="39.97" fill="#111" stroke="#111" stroke-width="1.00">El uso de documentales para enseñar la expoliación</text>
<text transform="translate(668.45,893.00) scale(1.0514,1)" font-family="Liberation Sans" font-size="38.62" fill="#111" stroke="#111" stroke-width="1.00">de recursos en África y sus consecuencias</text>
<text transform="translate(913.32,941.70) scale(1.0899,1)" font-family="Liberation Sans" font-size="24.71" fill="#111" stroke="#111" stroke-width="0.80">Fernando Ariel Bonfanti</text>
<text transform="translate(780.53,971.60) scale(1.0372,1)" font-family="Liberation Sans" font-size="25.29" fill="#111" stroke="#111" stroke-width="0.80">Departamento de Geografía (UNNE-Argentina)</text>
<text transform="translate(856.00,461.00) rotate(-2.93) scale(0.8000,1) translate(-2.00,0)" letter-spacing="0.700" filter="url(#rough)" font-family="Liberation Sans" font-size="72.67" fill="#E8467F" font-weight="bold">GEOGRAFÍA Y</text>
<text transform="translate(876.00,525.00) rotate(-3.15) scale(0.8000,1) translate(-4.00,0)" letter-spacing="1.990" filter="url(#rough)" font-family="Liberation Sans" font-size="72.67" fill="#E8467F" font-weight="bold">NARRATIVAS</text>
<text transform="translate(829.00,598.00) rotate(-3.57) scale(0.8000,1) translate(-1.00,0)" letter-spacing="0.701" filter="url(#rough)" font-family="Liberation Sans" font-size="72.67" fill="#E8467F" font-weight="bold">AUDIOVISUALES</text>
</g>
<defs><filter id="rough" x="-10%" y="-20%" width="120%" height="140%"><feTurbulence type="fractalNoise" baseFrequency="0.25" numOctaves="2" seed="3"/><feDisplacementMap in="SourceGraphic" scale="3.5"/></filter><pattern id="sqp" patternUnits="userSpaceOnUse" width="4" height="3"><path d="M0 2.5 L2 0.5 L4 2.5" fill="none" stroke="#E0402C" stroke-width="1.3"/></pattern></defs>
<rect x="630.76" y="854.00" width="65.20" height="3" fill="url(#sqp)"/>
<rect x="763.42" y="854.00" width="251.79" height="3" fill="url(#sqp)"/>
<rect x="1118.62" y="854.00" width="146.14" height="3" fill="url(#sqp)"/>
<rect x="1318.71" y="854.00" width="202.34" height="3" fill="url(#sqp)"/>
<rect x="724.88" y="896.48" width="155.66" height="3" fill="url(#sqp)"/>
<rect x="891.82" y="896.48" width="45.15" height="3" fill="url(#sqp)"/>
<rect x="948.25" y="896.48" width="103.77" height="3" fill="url(#sqp)"/>
<rect x="1169.33" y="896.48" width="268.55" height="3" fill="url(#sqp)"/>
<rect x="1097.28" y="943.92" width="98.73" height="3" fill="url(#sqp)"/>
<defs>
<clipPath id="vclip"><rect x="1600" y="0" width="320" height="180"/></clipPath>
<filter id="vblur" filterUnits="userSpaceOnUse" x="1590" y="-10" width="340" height="200"><feGaussianBlur stdDeviation="0.8"/></filter>
<linearGradient id="wood" x1="0" y1="0" x2="0" y2="1"><stop offset="0" stop-color="#A45A28"/><stop offset="0.5" stop-color="#B86A30"/><stop offset="1" stop-color="#A65C2A"/></linearGradient>
<linearGradient id="desk" x1="0" y1="0" x2="0" y2="1"><stop offset="0" stop-color="#E0A840"/><stop offset="1" stop-color="#C88A22"/></linearGradient>
<radialGradient id="seal" cx="0.5" cy="0.5" r="0.5"><stop offset="0" stop-color="#E6C262"/><stop offset="0.68" stop-color="#E2BE5E"/><stop offset="0.74" stop-color="#EDE2BE"/><stop offset="0.97" stop-color="#E6DAB4"/><stop offset="1" stop-color="#C8B888"/></radialGradient>
</defs>
<g id="video" clip-path="url(#vclip)">
<g filter="url(#vblur)">
<rect x="1592" y="-8" width="336" height="196" fill="#C4B190"/>
<!-- left screen wall -->
<rect x="1592" y="-8" width="82" height="120" fill="#DADCDD"/>
<rect x="1592" y="-8" width="82" height="11" fill="#B9B9B9"/>
<rect x="1592" y="2" width="66.5" height="53" fill="#E2EEF0"/>
<rect x="1592" y="15" width="39.5" height="28" fill="#E4E0C8"/>
<rect x="1592" y="43" width="46" height="6" fill="#E0E0D0"/>
<g fill="#C06060" opacity="0.6"><rect x="1601" y="24" width="24" height="1.5"/><rect x="1601" y="28" width="20" height="1.5"/><rect x="1601" y="31" width="24" height="1.5"/></g>
<rect x="1592" y="55" width="82" height="45" fill="#D4D5D6"/>
<rect x="1592" y="60" width="82" height="38" fill="#D9D9DA"/>
<rect x="1592" y="98" width="82" height="14" fill="#A86C3A"/>
<!-- wood wall -->
<rect x="1673" y="-8" width="57" height="120" fill="url(#wood)"/>
<rect x="1822" y="-8" width="16" height="108" fill="url(#wood)"/>
<g stroke="#8E4A20" stroke-width="0.6" opacity="0.6">
<path d="M1673 18 H1730 M1673 38 H1730 M1673 58 H1730 M1673 78 H1730 M1822 20 H1838 M1822 45 H1838 M1822 70 H1838"/>
</g>
<!-- banner -->
<rect x="1729.5" y="6" width="93" height="109" fill="#1D206F" stroke="#C8A848" stroke-width="2"/>
<rect x="1718" y="2" width="115" height="2.5" fill="#B09850"/>
<g fill="#1A1A30"><rect x="1731" y="1.8" width="3" height="3"/><rect x="1740" y="1.8" width="3" height="3"/><rect x="1749" y="1.8" width="3" height="3"/><rect x="1758" y="1.8" width="3" height="3"/><rect x="1767" y="1.8" width="3" height="3"/><rect x="1776" y="1.8" width="3" height="3"/><rect x="1785" y="1.8" width="3" height="3"/><rect x="1794" y="1.8" width="3" height="3"/><rect x="1803" y="1.8" width="3" height="3"/><rect x="1812" y="1.8" width="3" height="3"/><rect x="1821" y="1.8" width="3" height="3"/></g>
<circle cx="1775" cy="54" r="31" fill="#E9E0C0"/>
<circle cx="1775" cy="54" r="30.5" fill="none" stroke="#BFAE80" stroke-width="1"/>
<circle cx="1775" cy="54" r="26.5" fill="none" stroke="#8A7A60" stroke-width="2.2" stroke-dasharray="1.2 1.4" opacity="0.7"/>
<circle cx="1775" cy="54" r="24" fill="#E4C064"/>
<g fill="#2A3A8A">
<path d="M1769 38 L1775 33 L1781 38 L1778 45 L1772 45 Z"/><path d="M1769 70 L1775 75 L1781 70 L1778 63 L1772 63 Z"/>
<path d="M1759 48 L1754 54 L1759 60 L1766 57 L1766 51 Z"/><path d="M1791 48 L1796 54 L1791 60 L1784 57 L1784 51 Z"/>
</g>
<g fill="#C8324A"><circle cx="1775" cy="39.5" r="2.3"/><circle cx="1775" cy="68.5" r="2.3"/><circle cx="1760.5" cy="54" r="2.3"/><circle cx="1789.5" cy="54" r="2.3"/></g>
<g fill="#E8E8F0" opacity="0.8"><circle cx="1771" cy="41" r="1.2"/><circle cx="1779" cy="67" r="1.2"/><circle cx="1762" cy="50" r="1.2"/><circle cx="1788" cy="58" r="1.2"/></g>
<circle cx="1775" cy="54" r="8.8" fill="#E2BE62" stroke="#22222A" stroke-width="1.8"/>
<path d="M1770.5 50 V54 H1779.5 V50 M1770.5 58 H1779.5" fill="none" stroke="#22222A" stroke-width="1.2"/>
<path d="M1742 88 Q1750 84 1775 87 Q1800 84 1807 88 L1806 102 Q1790 98 1775 101 Q1755 98 1743 102 Z" fill="#D8C68E"/>
<!-- right window wall -->
<rect x="1837" y="-8" width="91" height="108" fill="#D6D6D2"/>
<rect x="1878" y="-8" width="50" height="23" fill="#ECECE8"/>
<rect x="1840" y="-8" width="6" height="90" fill="#BFC0BC"/>
<rect x="1847" y="-8" width="14" height="88" fill="#E2E3E0"/>
<rect x="1861" y="-8" width="20" height="83" fill="#CDCECA"/>
<rect x="1881" y="15" width="9" height="80" fill="#C4C5C0"/>
<rect x="1893" y="16" width="35" height="75" fill="#BCC2B6"/>
<rect x="1896" y="22" width="32" height="60" fill="#A8B0A0" opacity="0.8"/>
<path d="M1838 78 L1928 96 V103 L1838 86 Z" fill="#B8B9B5"/>
<rect x="1895" y="100" width="33" height="88" fill="#D8D6D0"/>
<!-- floor -->
<rect x="1592" y="100" width="336" height="88" fill="#CDBB9A"/>
<rect x="1749" y="112" width="40" height="76" fill="#D6C7A8"/>
<rect x="1749" y="114" width="40" height="26" fill="#A06A3C"/>
<!-- chair in front of banner -->
<path d="M1768 94 Q1770 90 1785 90 Q1800 90 1802 94 L1801 108 H1769 Z" fill="#8D9AA3"/>
<rect x="1769" y="108" width="5" height="10" fill="#7A8790"/>
<path d="M1769 113 V155 M1775 115 V162" stroke="#2A2A2A" stroke-width="1.4"/>
<!-- left desk -->
<rect x="1657" y="94" width="16" height="16" fill="#8D9AA3"/>
<path d="M1592 123 L1724 108 L1749 112 V123 H1592 Z" fill="#E4B56A"/>
<rect x="1592" y="122" width="157" height="50" fill="url(#desk)"/>
<rect x="1661" y="122" width="1.5" height="50" fill="#B07A20"/>
<rect x="1592" y="122" width="157" height="3" fill="#E8BC70"/>
<rect x="1592" y="96" width="40.5" height="24" fill="#141414"/>
<rect x="1592" y="118" width="26" height="3" fill="#2A2A2A"/>
<path d="M1672 91 H1722.5 L1721 114 H1673 Z" fill="#121212"/>
<rect x="1692" y="113" width="14" height="2.5" fill="#333"/>
<rect x="1641" y="97" width="8" height="20" rx="2" fill="#E8E8EE" opacity="0.9"/>
<rect x="1653" y="104" width="5" height="10" fill="#D8D8DE" opacity="0.7"/>
<rect x="1728" y="110" width="5" height="2" fill="#333"/>
<!-- right desk -->
<path d="M1784 108 L1800 100 L1860 100 L1887 118 V128 H1784 Z" fill="#E8B868"/>
<rect x="1784" y="124" width="103" height="49" fill="url(#desk)"/>
<path d="M1830 108 L1855 105 L1870 116 L1845 118 Z" fill="#E4E4EA"/>
<path d="M1822 110 L1840 108 L1845 116 L1825 117 Z" fill="#2A2A3A" opacity="0.8"/>
<path d="M1830 118 L1840 117 L1842 122 L1832 123 Z" fill="#E8E8EE" opacity="0.8"/>
<path d="M1806 76 L1815 71 L1817 104 L1808 108 Z" fill="#1A1A22"/>
<rect x="1806" y="107" width="12" height="3" fill="#2A2A44"/>
<!-- man -->
<path d="M1849 86 Q1856 82 1868 84 Q1882 86 1889 96 L1891 118 L1860 120 Q1850 110 1848 100 Z" fill="#D9D9D2"/>
<path d="M1820 101 Q1835 96 1850 92 L1852 100 Q1838 104 1822 106 Z" fill="#C89A7C"/>
<path d="M1860 72 Q1866 66 1874 70 Q1879 75 1876 84 Q1872 92 1865 90 Q1859 86 1860 78 Z" fill="#C49478"/>
<path d="M1858 74 Q1862 66 1872 67 Q1879 69 1878 76 L1873 78 Q1866 73 1862 78 Z" fill="#2A221E"/>
<rect x="1889" y="102" width="16" height="22" rx="3" fill="#7D8C93"/>
<path d="M1890 124 V165 M1904 124 V162" stroke="#2A2A2A" stroke-width="1.4"/>
<rect x="1888" y="125" width="14" height="16" fill="#2E3A33"/>
<!-- pink chairs -->
<path d="M1592 160 H1661 V188 H1592 Z" fill="#A8467C"/>
<rect x="1604" y="166" width="55" height="22" fill="#BBAA7A"/>
<path d="M1662 153 H1723 V188 H1662 Z" fill="#A8467C"/>
<rect x="1666" y="160" width="55" height="28" fill="#C2B282"/>
<rect x="1688" y="169" width="10" height="2.5" fill="#3A2A2A"/>
<rect x="1626" y="175" width="10" height="2.5" fill="#3A2A2A"/>
<path d="M1783 175 L1830 173 H1928 V188 H1783 Z" fill="#A24578"/>
<path d="M1830 170 H1928 V188 H1830 Z" fill="#B04A80"/>
</g>
</g>

</svg>
</body></html>
